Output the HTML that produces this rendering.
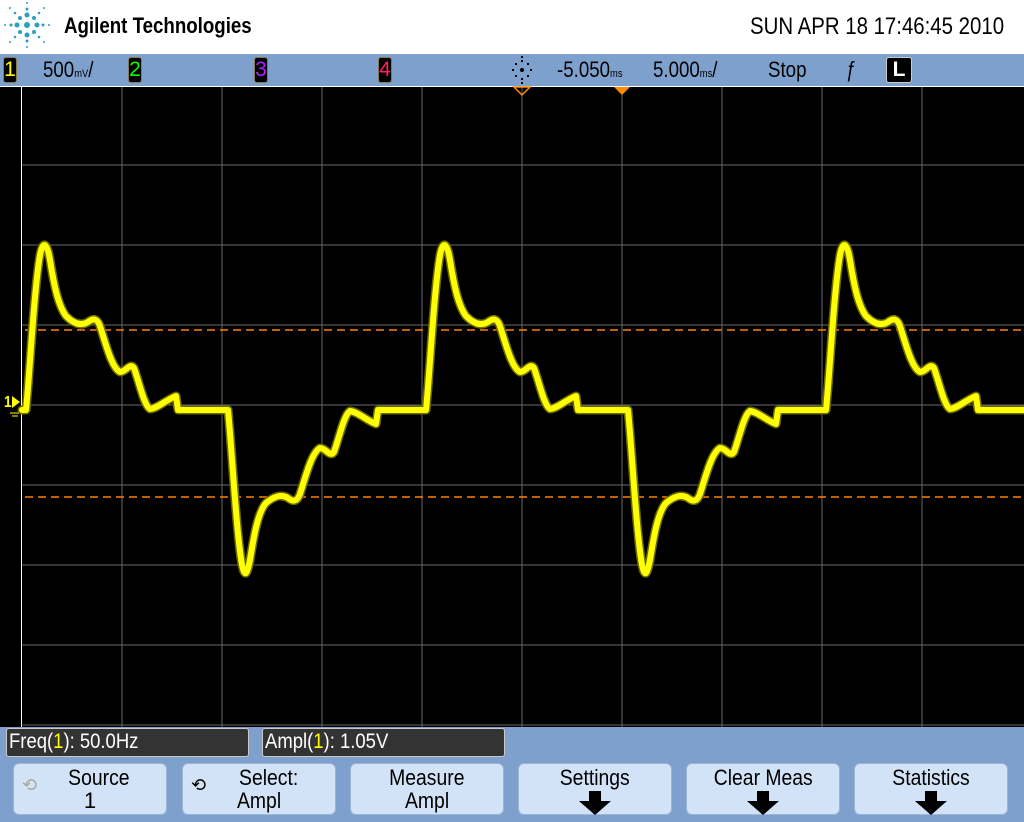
<!DOCTYPE html>
<html><head><meta charset="utf-8"><style>
*{margin:0;padding:0;box-sizing:border-box}
body{width:1024px;height:822px;background:#fff;position:relative;overflow:hidden;font-family:"Liberation Sans",sans-serif}
.abs{position:absolute}
.top{left:0;top:54px;width:1024px;height:32px;background:#7ea0cc}
.chn{position:absolute;top:57px;width:14px;height:26px;background:#000;border:1px solid #8a7a50;border-radius:3px;font-size:21px;text-align:center;line-height:24px}
.t{position:absolute;font-size:22px;color:#000;transform:scaleX(.85);transform-origin:left top;white-space:nowrap}
.bot{left:0;top:727px;width:1024px;height:95px;background:#7ea0cc}
.mb{position:absolute;top:728px;height:29px;background:#333;border:1px solid #c8c8c8;border-radius:3px;color:#fff;font-size:21px;line-height:26px;padding-left:2px;white-space:nowrap}
.mb span.in{display:inline-block;transform:scaleX(.88);transform-origin:left}
.btn{position:absolute;top:763px;width:154px;height:52px;background:#d2e3f7;border:1px solid #9db5d6;border-radius:6px;text-align:center;font-size:22px;line-height:23px;color:#000;padding-top:2px}
.btn .l{display:inline-block;transform:scaleX(.88)}
.arr{display:block;margin:2px auto 0}
</style></head><body>
<svg class="abs" style="left:0;top:0" width="60" height="54">
<g fill="#2aa0c0">
<circle cx="27" cy="25" r="3"/>
<circle cx="27" cy="15" r="2.5"/><circle cx="27" cy="35" r="2.5"/><circle cx="17" cy="25" r="2.5"/><circle cx="37" cy="25" r="2.5"/>
<circle cx="20" cy="18" r="2"/><circle cx="34" cy="18" r="2"/><circle cx="20" cy="32" r="2"/><circle cx="34" cy="32" r="2"/>
<circle cx="27" cy="9" r="1.5"/><circle cx="27" cy="41" r="1.5"/><circle cx="11" cy="25" r="1.5"/><circle cx="43" cy="25" r="1.5"/>
<circle cx="15" cy="13" r="1.3"/><circle cx="39" cy="13" r="1.3"/><circle cx="15" cy="37" r="1.3"/><circle cx="39" cy="37" r="1.3"/>
<circle cx="27" cy="3" r="1"/><circle cx="27" cy="47" r="1"/><circle cx="5" cy="25" r="1"/><circle cx="49" cy="25" r="1"/>
<circle cx="10" cy="8" r="1"/><circle cx="44" cy="8" r="1"/><circle cx="10" cy="42" r="1"/><circle cx="44" cy="42" r="1"/>
</g></svg>
<div class="t" style="left:64px;top:13px;font-weight:bold;font-size:22px">Agilent Technologies</div>
<div class="t" style="left:750px;top:13px;font-size:24px">SUN APR 18 17:46:45 2010</div>
<div class="abs top"></div>
<div class="chn" style="left:3px;color:#ff0">1</div>
<div class="t" style="left:43px;top:57px">500<span style="font-size:11px">mV</span>/</div>
<div class="chn" style="left:128px;color:#0f0">2</div>
<div class="chn" style="left:254px;color:#b020ff">3</div>
<div class="chn" style="left:378px;color:#ff2060">4</div>
<svg class="abs" style="left:507px;top:56px" width="30" height="30"><g fill="#000"><circle cx="15" cy="14" r="2"/><rect x="14" y="4" width="2" height="2"/><rect x="14" y="22" width="2" height="2"/><rect x="5" y="13" width="2" height="2"/><rect x="23" y="13" width="2" height="2"/><rect x="8" y="7" width="2" height="2"/><rect x="20" y="7" width="2" height="2"/><rect x="8" y="19" width="2" height="2"/><rect x="20" y="19" width="2" height="2"/><rect x="14" y="26" width="2" height="2"/><rect x="14" y="0" width="2" height="2"/></g></svg>
<div class="t" style="left:557px;top:57px">-5.050<span style="font-size:11px">ms</span></div>
<div class="t" style="left:653px;top:57px">5.000<span style="font-size:11px">ms</span>/</div>
<div class="t" style="left:768px;top:57px">Stop</div>
<div class="t" style="left:846px;top:57px">ƒ</div>
<div class="chn" style="left:886px;width:26px;color:#fff;font-weight:bold;border-color:#ccc">L</div>
<svg class="abs" style="left:0;top:86px" width="1024" height="641">
<rect x="0" y="0" width="1024" height="641" fill="#000"/>
<line x1="0" y1="0.5" x2="1024" y2="0.5" stroke="#fff"/>
<line x1="21.5" y1="0" x2="21.5" y2="641" stroke="#fff"/>
<g stroke="#6a6a6a" stroke-width="1">
<line x1="122" y1="1" x2="122" y2="641"/><line x1="222" y1="1" x2="222" y2="641"/><line x1="322" y1="1" x2="322" y2="641"/><line x1="422" y1="1" x2="422" y2="641"/><line x1="522" y1="1" x2="522" y2="641"/><line x1="622" y1="1" x2="622" y2="641"/><line x1="722" y1="1" x2="722" y2="641"/><line x1="822" y1="1" x2="822" y2="641"/><line x1="922" y1="1" x2="922" y2="641"/>
<line x1="22" y1="79" x2="1024" y2="79"/><line x1="22" y1="159" x2="1024" y2="159"/><line x1="22" y1="239" x2="1024" y2="239"/><line x1="22" y1="319" x2="1024" y2="319"/><line x1="22" y1="399" x2="1024" y2="399"/><line x1="22" y1="479" x2="1024" y2="479"/><line x1="22" y1="559" x2="1024" y2="559"/><line x1="22" y1="639" x2="1024" y2="639"/>
</g>
<polygon points="514,1 530,1 522,9" fill="none" stroke="#ff8c00" stroke-width="1.5"/>
<polygon points="614,1 630,1 622,9" fill="#ff8c00"/>
<line x1="25" y1="244" x2="1024" y2="244" stroke="#ff8000" stroke-width="1.5" stroke-dasharray="8,5"/>
<line x1="25" y1="411" x2="1024" y2="411" stroke="#ff8000" stroke-width="1.5" stroke-dasharray="8,5"/>
</svg>
<div class="t" style="left:4px;top:394px;color:#ff0;font-size:16px;font-weight:bold">1</div>
<svg class="abs" style="left:10px;top:396px" width="12" height="22"><polygon points="2,0 10,6 2,12" fill="#ff0"/><line x1="0" y1="17" x2="10" y2="17" stroke="#ff0"/><line x1="2" y1="20" x2="8" y2="20" stroke="#ff0"/></svg>
<svg class="abs" style="left:0;top:0" width="1024" height="727">
<defs><path id="w" d="M22,410 L26,410 C30,370 34,290 40,255 C43,240 47,242 50,260 C54,285 58,305 66,316 C72,322 80,327 88,322 C93,318 97,318 100,326 C106,345 112,368 120,372 C126,372 130,362 134,368 C140,385 144,405 150,409 C158,408 166,400 176,396 L178,410 L228,410 C232,450 236,530 242,565 C245,578 247,575 250,560 C254,535 258,512 266,503 C272,498 280,493 288,498 C293,502 297,502 300,494 C306,475 312,452 320,448 C326,448 330,458 334,452 C340,435 344,415 350,411 C358,412 366,420 376,424 L378,410 L424,410"/></defs>
<g fill="none" stroke-linejoin="round" stroke-linecap="round">
<g stroke="#6a6a00" stroke-width="9"><use href="#w"/><use href="#w" x="400"/><use href="#w" x="800"/></g>
<g stroke="#ffff00" stroke-width="6"><use href="#w"/><use href="#w" x="400"/><use href="#w" x="800"/></g>
</g></svg>
<div class="abs bot"></div>
<div class="mb" style="left:6px;width:243px"><span class="in">Freq(<span style="color:#ff0">1</span>): 50.0Hz</span></div>
<div class="mb" style="left:262px;width:243px"><span class="in">Ampl(<span style="color:#ff0">1</span>): 1.05V</span></div>
<div class="btn" style="left:13px"><span style="position:absolute;left:8px;top:10px;color:#aa9;font-size:18px">⟲</span>&nbsp;&nbsp;&nbsp;<span class="l">Source</span><br>1</div>
<div class="btn" style="left:182px"><span style="position:absolute;left:8px;top:10px;font-size:18px">⟲</span>&nbsp;&nbsp;&nbsp;<span class="l">Select:</span><br><span class="l">Ampl</span></div>
<div class="btn" style="left:350px"><span class="l">Measure</span><br><span class="l">Ampl</span></div>
<div class="btn" style="left:518px"><span class="l">Settings</span><svg class="arr" width="34" height="24"><polygon points="11,0 23,0 23,10 33,10 17,24 1,10 11,10" fill="#000"/></svg></div>
<div class="btn" style="left:686px"><span class="l">Clear Meas</span><svg class="arr" width="34" height="24"><polygon points="11,0 23,0 23,10 33,10 17,24 1,10 11,10" fill="#000"/></svg></div>
<div class="btn" style="left:854px"><span class="l">Statistics</span><svg class="arr" width="34" height="24"><polygon points="11,0 23,0 23,10 33,10 17,24 1,10 11,10" fill="#000"/></svg></div>
</body></html>
